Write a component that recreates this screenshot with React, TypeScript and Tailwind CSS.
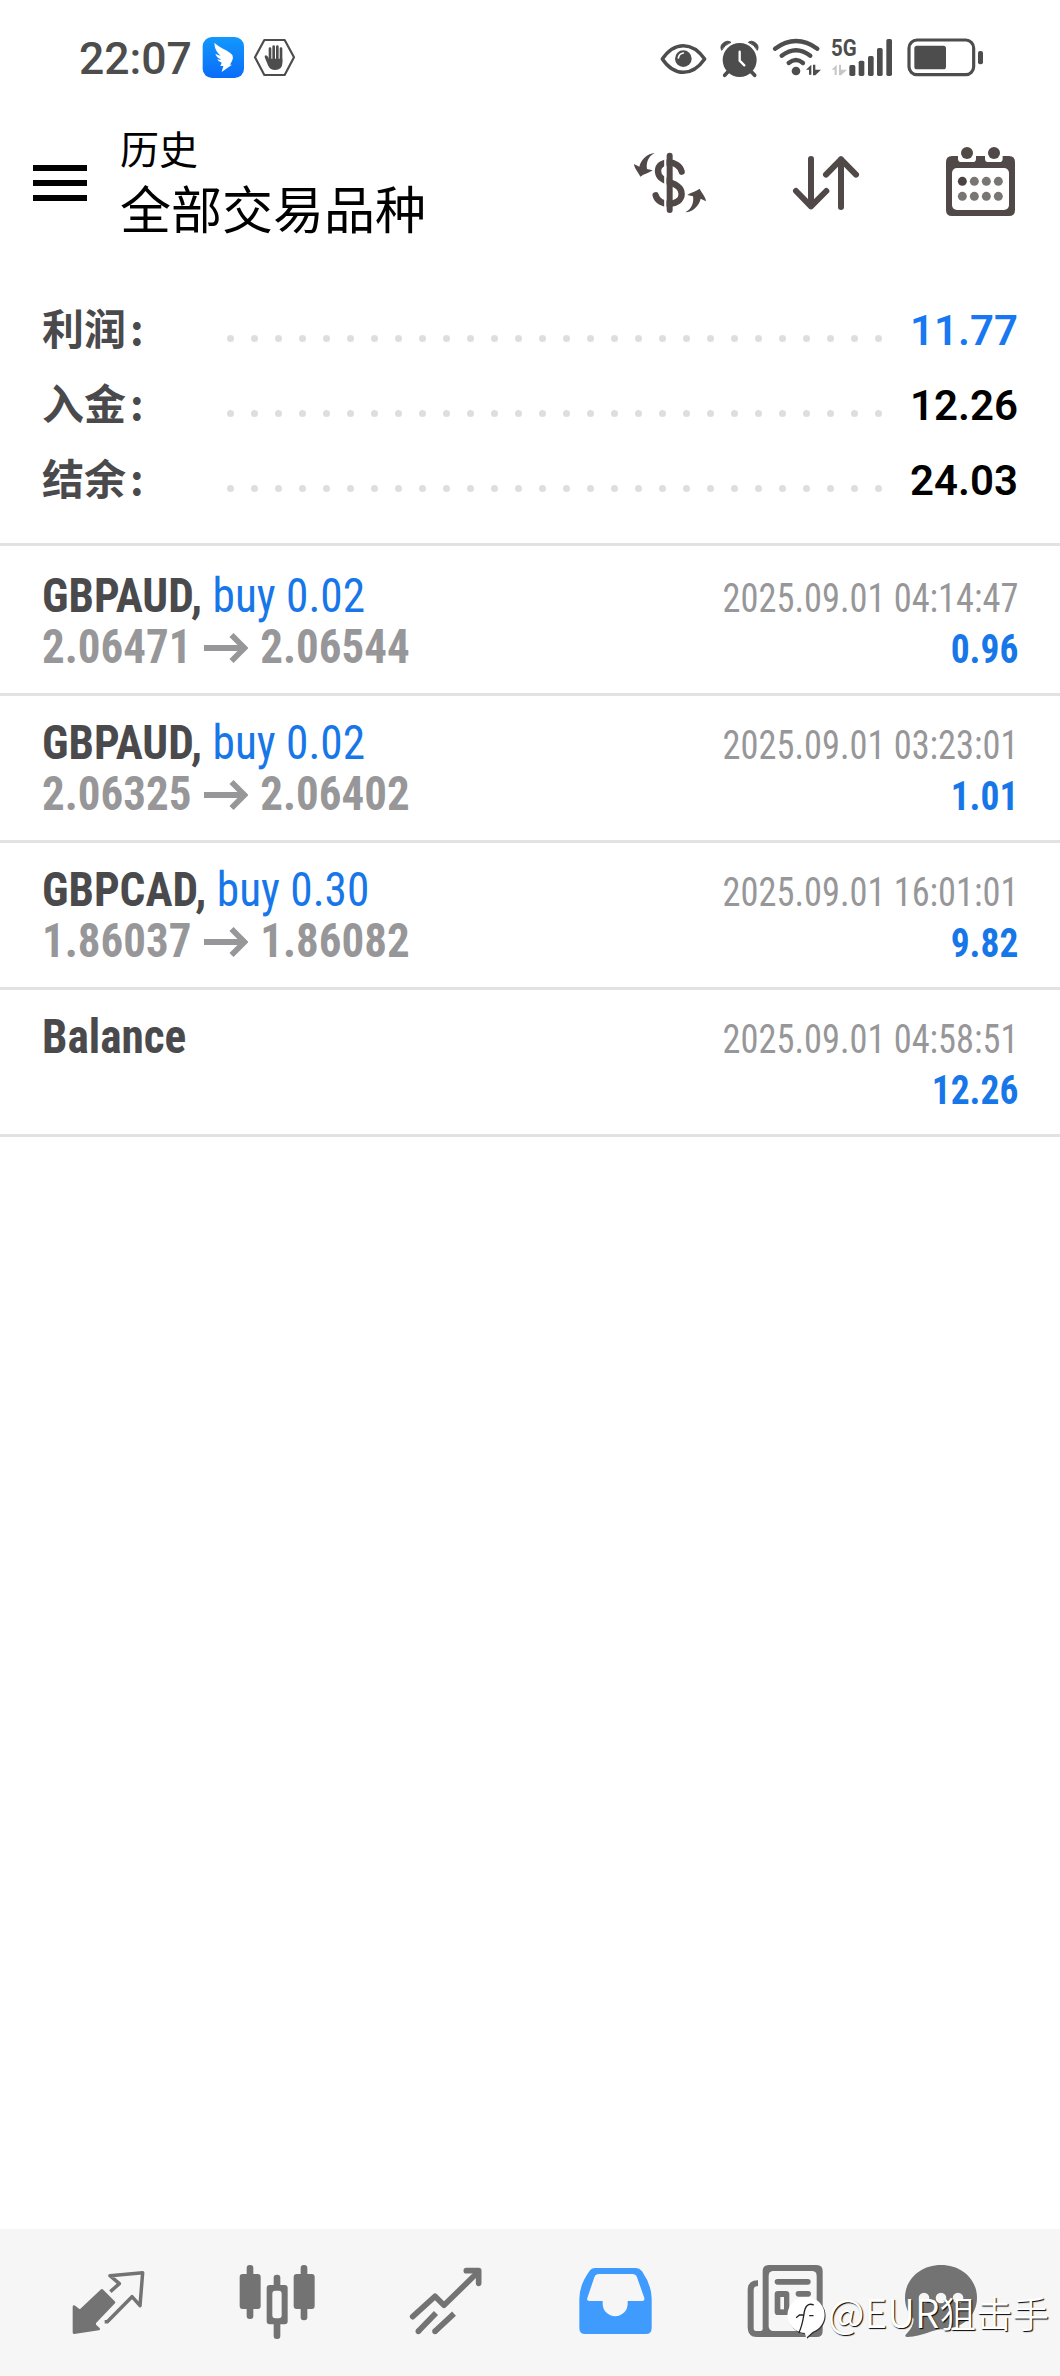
import type { ReactNode } from 'react';

const CJK = "font-['Noto_Sans_CJK_SC',sans-serif]";

function Tile({ box, className, label, children }: { box: string; className: string; label: string; children: ReactNode }) {
  return (
    <svg viewBox={box} className={`shrink-0 ${className}`} role="img" aria-label={label}>
      {children}
    </svg>
  );
}

function StatusBar() {
  return (
    <header className="flex h-[100px] justify-between pl-[79px] pr-[70px] pt-5 text-[#4d4d4d]">
      <div className="flex">
        <span className="w-[121px] font-[Roboto,sans-serif] text-[44.5px] font-medium leading-[78px]">22:07</span>
        <Tile box="420 0 150 240" className="h-20 w-[50px]" label="messenger">
          <defs>
            <linearGradient id="ding" x1="0" y1="0" x2="0" y2="1">
              <stop offset="0" stopColor="#1298fd" />
              <stop offset="1" stopColor="#0a6cf8" />
            </linearGradient>
          </defs>
          <rect x="428" y="51" width="124" height="123" rx="28" fill="url(#ding)" />
          <path d="M463 68C478 83 507 92 517 105Q521 112 516 123L510 134H516L485 156L490 138H481L485 128Q475 126 472 118Q479 120 484 118Q469 113 466 101Q474 106 482 107Q464 94 463 68Z" fill="#fff" />
        </Tile>
        <Tile box="570 0 150 240" className="h-20 w-[50px]" label="blocker">
          <path d="M613 60H674L702 112L674 165H613L585 112Z" fill="none" stroke="currentColor" strokeWidth="6.5" strokeLinejoin="round" />
          <path d="M630 127V86M641 120V80M652 120V80M663 126V86" stroke="currentColor" strokeWidth="8" strokeLinecap="round" />
          <path d="M626 116H667V130Q667 150 645 150Q631 150 625 138L615 114Q612 106 618 106Q622 106 626 114Z" fill="currentColor" />
        </Tile>
      </div>
      <div className="flex">
        <Tile box="60 0 150 240" className="h-20 w-[50px]" label="eye comfort">
          <path d="M67 117Q94 77 130 77T194 117Q166 157 130 157T67 117Z" fill="none" stroke="currentColor" strokeWidth="10.5" strokeLinejoin="round" />
          <circle cx="130" cy="116" r="25" fill="currentColor" />
          <path d="M115 114Q117 101 130 99" fill="none" stroke="#fff" strokeWidth="5" strokeLinecap="round" />
        </Tile>
        <Tile box="210 0 165 240" className="h-20 w-[55px]" label="alarm">
          <circle cx="299" cy="120" r="51" fill="currentColor" />
          <path d="M245 91Q238 76 253 67Q264 60 273 67Q253 74 245 91ZM352 91Q359 76 344 67Q333 60 325 67Q344 74 352 91Z" fill="currentColor" stroke="currentColor" strokeWidth="3" strokeLinejoin="round" />
          <path d="M264 155L254 166M334 155L344 166" stroke="currentColor" strokeWidth="11" strokeLinecap="round" />
          <path d="M299 95V122L313 136" fill="none" stroke="#fff" strokeWidth="7" strokeLinecap="round" strokeLinejoin="round" />
        </Tile>
        <Tile box="375 0 180 240" className="h-20 w-[60px]" label="wifi">
          <g fill="none" stroke="currentColor" strokeWidth="13" strokeLinecap="round">
            <path d="M405 86Q468 40 532 86" />
            <path d="M425 107Q468 74 511 107" />
            <path d="M446 129Q468 111 489 129" />
          </g>
          <circle cx="468" cy="153" r="13" fill="currentColor" />
          <path d="M498 149L514 134V164H507V149ZM519 134H526V149H543L526 166H519Z" fill="currentColor" />
        </Tile>
        <Tile box="555 0 225 240" className="h-20 w-[75px]" label="5G signal">
          <text x="573" y="109" fontFamily="Roboto, sans-serif" fontSize="72" fontWeight="700" textLength="77" lengthAdjust="spacingAndGlyphs" fill="currentColor">5G</text>
          <path d="M575 149L590 134V165H584V149ZM597 134H603V149H621L603 166H597Z" fill="#c6c6c6" />
          <g fill="currentColor">
            <rect x="628" y="135" width="18" height="33" rx="5" />
            <rect x="656" y="122" width="17" height="46" rx="5" />
            <rect x="684" y="108" width="17" height="60" rx="5" />
            <rect x="711" y="84" width="17" height="84" rx="5" />
            <rect x="739" y="57" width="17" height="111" rx="5" />
          </g>
        </Tile>
        <Tile box="780 0 270 240" className="h-20 w-[90px]" label="battery">
          <rect x="807" y="60" width="194" height="104" rx="24" fill="none" stroke="currentColor" strokeWidth="9.5" />
          <rect x="823" y="77" width="95" height="71" rx="8" fill="currentColor" />
          <rect x="1014" y="93" width="15" height="40" rx="6" fill="currentColor" />
        </Tile>
      </div>
    </header>
  );
}

function CalendarDots() {
  return (
    <g>
      {[184, 229].map((y) =>
        [1087, 1123, 1159, 1195].map((x) => (
          <circle key={`${x}-${y}`} cx={x} cy={y} r="13.5" fill={x === 1087 && y === 184 ? '#4a4341' : '#797572'} />
        )),
      )}
    </g>
  );
}

function Toolbar() {
  return (
    <div className="flex h-[180px] justify-between pl-[33px] pr-[10px] pt-5">
      <div className="flex">
        <button aria-label="menu" className="flex w-[54px] flex-col gap-[9px] pt-[45px]">
          <span className="h-1.5 w-full bg-black" />
          <span className="h-1.5 w-full bg-black" />
          <span className="h-1.5 w-full bg-black" />
        </button>
        <div className={`pl-[33px] text-black ${CJK}`}>
          <div className="text-[39px] leading-[54px]">历史</div>
          <h1 className="text-[51px] leading-[66px]">全部交易品种</h1>
        </div>
      </div>
      <div className="flex text-[#514947]">
        <Tile box="60 0 345 360" className="h-[120px] w-[115px]" label="currency">
          <g fill="none" stroke="currentColor" strokeLinecap="round">
            <path d="M245 155C237 119 174 117 174 153C174 176 196 183 209 187C228 193 245 201 245 222C245 259 176 263 167 226" strokeWidth="19" />
          </g>
          <path d="M196 113V265" stroke="#fff" strokeWidth="7" />
          <path d="M209 107V270" stroke="currentColor" strokeWidth="18" strokeLinecap="round" />
          <path d="M164 99C144 109 138 130 141 147L158 151C147 160 132 161 121 170C116 158 103 146 102 132L118 140C123 118 143 100 164 99Z" fill="currentColor" />
          <path d="M164 99C144 109 138 130 141 147L158 151C147 160 132 161 121 170C116 158 103 146 102 132L118 140C123 118 143 100 164 99Z" fill="currentColor" transform="rotate(180 210 188)" />
        </Tile>
        <Tile box="405 0 525 360" className="h-[120px] w-[175px]" label="sort">
          <g fill="none" stroke="currentColor" strokeWidth="18" strokeLinecap="round" strokeLinejoin="round">
            <path d="M633 117V259M588 213L633 259L679 213" />
            <path d="M723 261V118M678 164L723 118L768 164" />
          </g>
        </Tile>
        <Tile box="930 0 420 360" className="h-[120px] w-[140px]" label="calendar">
          <path d="M1056 108H1074V116Q1074 126 1084 126H1118Q1128 126 1128 116V108H1155V116Q1155 126 1165 126H1198Q1208 126 1208 116V108H1227Q1245 108 1245 126V270Q1245 288 1227 288H1056Q1038 288 1038 270V126Q1038 108 1056 108Z" fill="currentColor" />
          <rect x="1056" y="144" width="171" height="126" rx="15" fill="#fff" />
          <circle cx="1101" cy="99" r="18" fill="currentColor" />
          <circle cx="1182" cy="99" r="18" fill="currentColor" />
          <CalendarDots />
        </Tile>
      </div>
    </div>
  );
}

const summary = [
  { label: '利润', value: '11.77', tone: 'text-[#1778f2]' },
  { label: '入金', value: '12.26', tone: 'text-black' },
  { label: '结余', value: '24.03', tone: 'text-black' },
];

function Summary() {
  return (
    <section className="h-[266px] border-b-[3px] border-[#e2e2e2] px-[42px] pt-[13px]">
      {summary.map((row) => (
        <div key={row.label} className="flex h-[75px] items-center">
          <span className={`-mt-[8px] w-[184.5px] text-[42px] font-bold leading-[75px] text-[#4a4a4d] ${CJK}`}>
            {row.label}
            <span className="pl-[4px]">:</span>
          </span>
          <span className="mt-[16px] flex w-[655px] justify-between">
            {Array.from({ length: 28 }, (_, i) => (
              <i key={i} className="size-[7px] rounded-full bg-[#dedede]" />
            ))}
          </span>
          <span className={`flex-1 text-right font-[Roboto,sans-serif] text-[42px] font-semibold leading-[75px] ${row.tone}`}>{row.value}</span>
        </div>
      ))}
    </section>
  );
}

type Deal = { symbol: string; volume?: string; open?: string; close?: string; time: string; profit: string };

const deals: Deal[] = [
  { symbol: 'GBPAUD', volume: '0.02', open: '2.06471', close: '2.06544', time: '2025.09.01 04:14:47', profit: '0.96' },
  { symbol: 'GBPAUD', volume: '0.02', open: '2.06325', close: '2.06402', time: '2025.09.01 03:23:01', profit: '1.01' },
  { symbol: 'GBPCAD', volume: '0.30', open: '1.86037', close: '1.86082', time: '2025.09.01 16:01:01', profit: '9.82' },
  { symbol: 'Balance', time: '2025.09.01 04:58:51', profit: '12.26' },
];

function DealRow({ deal }: { deal: Deal }) {
  return (
    <li className="flex h-[147px] justify-between whitespace-nowrap border-b-[3px] border-[#e2e2e2] px-[42px] font-['Roboto_Condensed',Roboto,sans-serif] leading-[51px] [font-stretch:75%]">
      <div className="pt-[21px] text-[48px] font-bold">
        <div className="origin-left scale-x-[0.943] text-[#4a4a4d]">
          {deal.symbol}
          {deal.volume && (
            <>
              , <span className="font-normal text-[#1877e8]">buy {deal.volume}</span>
            </>
          )}
        </div>
        {deal.open && (
          <div className="flex text-[#979799]">
            <span className="w-[162px] origin-left scale-x-[0.937]">{deal.open}</span>
            <Tile box="0 0 44 51" className="h-[51px] w-11" label="to">
              <path d="M0 27H40M27.500 14L40.500 27L27.500 40" fill="none" stroke="currentColor" strokeWidth="5.8" />
            </Tile>
            <span className="origin-left scale-x-[0.937] pl-[13px]">{deal.close}</span>
          </div>
        )}
      </div>
      <div className="pt-6 text-right text-[40px]">
        <div className="origin-right scale-x-[0.909] text-[#979799]">{deal.time}</div>
        <div className="origin-right scale-x-[0.937] font-bold text-[#1877e8]">{deal.profit}</div>
      </div>
    </li>
  );
}

function TabBar() {
  return (
    <nav className="flex h-[147px] bg-[#f6f6f6] text-[#737373]">
      <Tile box="0 57 510 441" className="h-[147px] w-[170px]" label="quotes">
        <path d="M306 241L342 277L284 338V346L296 357L222 368V290L240 303Z" fill="currentColor" stroke="currentColor" strokeWidth="8" strokeLinejoin="round" />
        <path d="M331 245L358 221L330 197L428 188L420 287L396 260L322 335H314" fill="none" stroke="currentColor" strokeWidth="10.5" strokeLinejoin="round" />
      </Tile>
      <Tile box="510 57 540 441" className="h-[147px] w-[180px]" label="charts">
        <g fill="currentColor">
          <rect x="740" y="165" width="20" height="162" rx="9" />
          <rect x="719" y="192" width="63" height="105" rx="9" />
          <rect x="902" y="165" width="20" height="166" rx="9" />
          <rect x="881" y="192" width="63" height="105" rx="9" />
          <rect x="821" y="194" width="20" height="193" rx="9" />
          <rect x="800" y="225" width="63" height="118" rx="9" />
        </g>
        <rect x="817" y="242" width="28" height="83" rx="9" fill="#f6f6f6" />
      </Tile>
      <Tile box="0 57 525 441" className="h-[147px] w-[175px]" label="trade">
        <g fill="none" stroke="currentColor" strokeWidth="17" strokeLinejoin="round">
          <path d="M188 320L255 259L282 286L381 189" strokeLinecap="round" />
          <path d="M349 182H386V220" strokeLinecap="round" />
          <path d="M258 309L205 364M312 311L255 364" />
          <path d="M205 364h.1M255 364h.1" strokeLinecap="round" />
        </g>
      </Tile>
      <Tile box="525 57 525 441" className="h-[147px] w-[175px]" label="history">
        <path d="M735 174H858Q868 174 876 184Q905 226 905 266V354Q905 372 887 372H706Q688 372 688 354V266Q688 226 718 184Q725 174 735 174Z" fill="#409bfe" />
        <path d="M747 192H847Q857 192 861 202L883 264Q885 273 877 273H833V281A37.500 37.500 0 0 1 758 281V273H718Q709 273 712 264L733 202Q737 192 747 192Z" fill="#f6f6f6" />
      </Tile>
      <Tile box="0 57 510 441" className="h-[147px] w-[170px]" label="news">
        <path d="M174 211Q144 210 143 240V353Q144 380 170 381H350Q368 381 368 363V183Q368 165 350 165H206Q188 165 188 183V357Q188 363 182 363H168Q161 363 161 355V240Q161 228 174 228Z" fill="currentColor" />
        <rect x="206" y="183" width="144" height="180" rx="14" fill="#f6f6f6" />
        <g fill="currentColor">
          <rect x="224" y="207" width="108" height="17" rx="8.500" />
          <rect x="224" y="243" width="44" height="72" rx="10" />
          <rect x="287" y="243" width="46" height="17" rx="8.500" />
        </g>
        <rect x="241" y="261" width="11" height="37" fill="#f6f6f6" />
      </Tile>
      <Tile box="510 57 570 441" className="h-[147px] w-[190px]" label="messages">
        <path d="M723 165C785 165 831 208 831 263C831 319 785 358 723 358C700 358 668 380 623 381Q611 381 619 372Q641 350 641 327C624 311 615 288 615 263C615 208 662 165 723 165Z" fill="currentColor" />
        <g fill="#f6f6f6">
          <circle cx="672" cy="264" r="16" />
          <circle cx="723" cy="264" r="16" />
          <circle cx="774" cy="264" r="16" />
        </g>
      </Tile>
    </nav>
  );
}

function Watermark() {
  return (
    <div className="absolute bottom-[36px] right-[11px] flex items-center whitespace-nowrap text-white">
      <svg viewBox="255 255 125 135" className="mr-[1px] mt-2 h-[45px] w-[42px] overflow-visible" aria-hidden="true">
        <path d="M318 264A54 54 0 0 1 337 369L318 386L314 372A54 54 0 1 1 318 264Z" fill="#333" transform="translate(3 3)" />
        <path d="M318 264A54 54 0 0 1 337 369L318 386L314 372A54 54 0 1 1 318 264Z" fill="#fff" />
        <path d="M341 288Q315 277 311 318Q306 350 296 372M288 326L298 318H311M327 320H340" fill="none" stroke="#222" strokeWidth="4" />
      </svg>
      <span className={`text-[36.5px] font-[350] leading-[54px] [text-shadow:1px_1px_1px_#000] ${CJK}`}>
        <span className="text-[39px]">@EUR</span>狙击手
      </span>
    </div>
  );
}

export default function App() {
  return (
    <main className="relative flex h-[2376px] w-[1060px] flex-col overflow-hidden bg-white">
      <StatusBar />
      <Toolbar />
      <Summary />
      <ul className="flex-1 pt-[3px]">
        {deals.map((deal) => (
          <DealRow key={deal.time} deal={deal} />
        ))}
      </ul>
      <TabBar />
      <Watermark />
    </main>
  );
}
